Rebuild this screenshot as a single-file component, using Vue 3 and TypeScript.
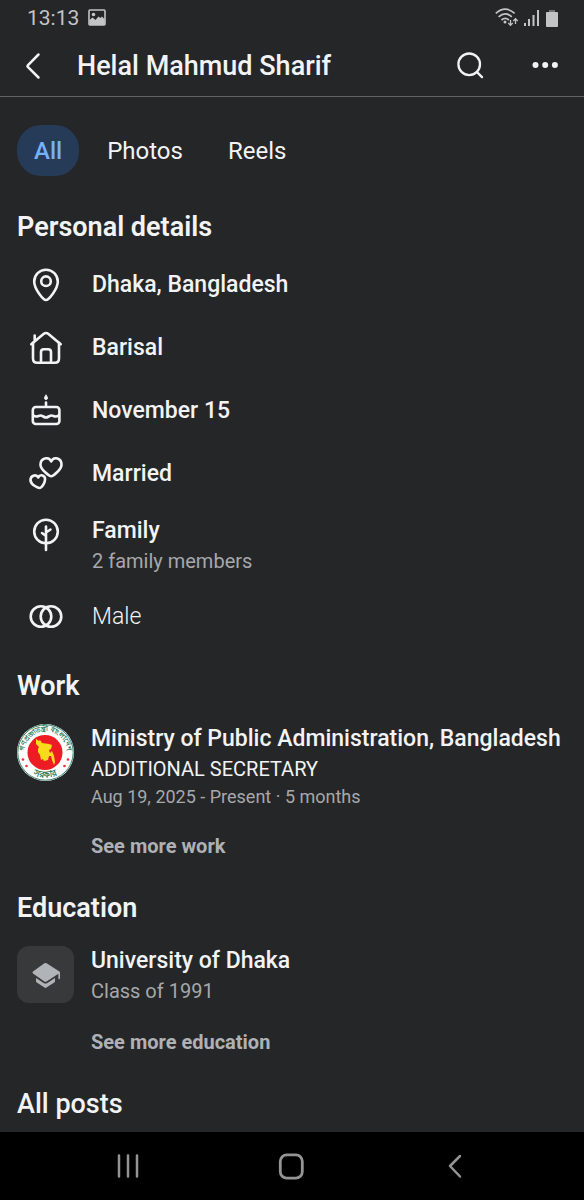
<script setup lang="ts">
import { ref } from 'vue'

type IconName = 'pin' | 'home' | 'cake' | 'hearts' | 'tree' | 'rings'

interface Detail {
  icon: IconName
  text: string
  note?: string
  light?: boolean
}

const tabs: string[] = ['All', 'Photos', 'Reels']
const activeTab = ref<string>('All')

const details: Detail[] = [
  { icon: 'pin', text: 'Dhaka, Bangladesh' },
  { icon: 'home', text: 'Barisal' },
  { icon: 'cake', text: 'November 15' },
  { icon: 'hearts', text: 'Married' },
  { icon: 'tree', text: 'Family', note: '2 family members' },
  { icon: 'rings', text: 'Male', light: true },
]
</script>

<template>
  <div class="screen">
    <div class="status">
      <span class="clock">13:13</span>
      <svg class="picture" width="18" height="18" viewBox="0 0 18 18" aria-hidden="true">
        <rect x="1" y="1" width="16" height="15" rx="1" fill="none" stroke="currentColor" stroke-width="1.6" />
        <circle cx="5.5" cy="5.5" r="1.8" fill="currentColor" />
        <path d="M1.500 11 4.500 8.500 7.500 11l3-3.500 2 1.500 1.500-1.500 2.800 3V16H1.500z" fill="currentColor" />
      </svg>
      <svg class="signals" width="64" height="20" viewBox="0 0 64 20" aria-hidden="true">
        <g fill="none" stroke="currentColor" stroke-width="1.7">
          <path d="M.8 5.400Q10.200-3 19.600 5.400" />
          <path d="M3.600 8.800q6.600-6 13.200 0" />
          <path d="M6.500 12q3.700-3.400 7.400 0" />
        </g>
        <circle cx="10" cy="14" r="1.500" fill="currentColor" />
        <path d="M15.500 12v5m-2.200-2 2.200 2.400 2.200-2.400M20.500 16v-5m-2.200 2 2.200-2.400 2.200 2.400" fill="none" stroke="currentColor" stroke-width="1.300" />
        <g fill="currentColor">
          <rect x="29" y="15" width="2" height="3" />
          <rect x="33" y="11" width="2" height="7" />
          <rect x="37.500" y="7" width="2" height="11" />
          <rect x="42" y="2" width="2" height="16" />
          <rect x="51" y="4" width="12" height="15" rx="1" />
          <rect x="54" y="2" width="6" height="2" opacity=".5" />
        </g>
      </svg>
    </div>

    <header class="bar">
      <button class="icon-button back" type="button" aria-label="Back">
        <svg width="34" height="34" viewBox="0 0 34 34" fill="none" stroke="currentColor" stroke-width="2.500" stroke-linecap="round" stroke-linejoin="round">
          <path d="M23.500 5.500 12.800 16.300Q12 17.100 12.800 17.900L23.500 28.500" />
        </svg>
      </button>
      <h1>Helal Mahmud Sharif</h1>
      <button class="icon-button" type="button" aria-label="Search">
        <svg width="34" height="34" viewBox="0 0 34 34" fill="none" stroke="currentColor" stroke-width="2.300" stroke-linecap="round">
          <circle cx="15.200" cy="15.300" r="10.800" />
          <path d="m23 23.100 5 5" />
        </svg>
      </button>
      <button class="icon-button more" type="button" aria-label="More options">
        <svg width="34" height="34" viewBox="0 0 34 34" fill="currentColor">
          <circle cx="7.500" cy="16" r="3" />
          <circle cx="17.200" cy="16" r="3" />
          <circle cx="26.900" cy="16" r="3" />
        </svg>
      </button>
    </header>

    <main>
      <nav class="tabs" aria-label="Profile sections">
        <button
          v-for="tab in tabs"
          :key="tab"
          type="button"
          :class="{ active: tab === activeTab }"
          @click="activeTab = tab"
        >{{ tab }}</button>
      </nav>

      <section class="personal">
        <h2>Personal details</h2>
        <ul>
          <li v-for="item in details" :key="item.text" :class="{ light: item.light, tall: item.note }">
            <svg class="glyph" width="34" height="34" viewBox="0 0 34 34" fill="none" stroke="currentColor" stroke-width="2.600" stroke-linecap="round" stroke-linejoin="round" aria-hidden="true">
              <template v-if="item.icon === 'pin'">
                <path d="M17 32C14.500 32 5.200 21.200 5.200 13.500a11.800 11.800 0 0 1 23.600 0C28.800 21.200 19.500 32 17 32z" />
                <circle cx="17" cy="13.200" r="4.800" />
              </template>
              <template v-else-if="item.icon === 'home'">
                <path d="M2.300 13.200 14.500 3q2.500-2 5 0L31.700 13.200" />
                <path d="M4 11.800V27.500q0 4.200 4.200 4.200H25.800q4.200 0 4.200-4.200V11.800M5.700 9V4.500" />
                <path d="M12 31.500V21q0-2.800 2.800-2.800h4.400Q22 18.200 22 21v10.500" />
              </template>
              <template v-else-if="item.icon === 'cake'">
                <rect x="3.800" y="13" width="26.600" height="17" rx="3" />
                <path d="M17 12V8.500M4.500 21.500c3 2.500 5 0 7 0s3.500 2 5.500 2 3.500-2 5.500-2 4 2.500 7 0" />
                <path d="M17 1.200c1 1.200 1.500 2 1.500 2.800a1.500 1.500 0 0 1-3 0c0-.8.500-1.600 1.500-2.800z" fill="currentColor" stroke-width="1" />
              </template>
              <template v-else-if="item.icon === 'hearts'">
                <path d="M22.200 19.300C20.500 19.300 11.500 12.500 11.500 7.700C11.500 .8 19.500-.8 22.200 4.500C25-.8 32.500 .8 32.500 7.700C32.500 12.500 24 19.300 22.200 19.300z" />
                <path d="M11 31C9.500 31.200 2 28 1.500 23.500C1.200 18.600 7 16.600 9.300 20.500C11 16.800 16.500 18 16 22.800C15.700 26.800 12.500 30.800 11 31z" />
              </template>
              <template v-else-if="item.icon === 'tree'">
                <circle cx="17" cy="13.500" r="11.800" />
                <path d="M17 32V8.500M17 18l-4-3M17 14.500l4.500-3" />
              </template>
              <template v-else>
                <circle cx="12" cy="16.500" r="10.300" />
                <circle cx="22" cy="16.500" r="10.300" />
              </template>
            </svg>
            <div>
              <p class="title">{{ item.text }}</p>
              <p v-if="item.note" class="note">{{ item.note }}</p>
            </div>
          </li>
        </ul>
      </section>

      <section class="group">
        <h2>Work</h2>
        <div class="entry">
          <svg class="thumb" width="57" height="57" viewBox="0 0 57 57" role="img" aria-label="Government seal">
            <circle cx="28.500" cy="28.500" r="28.500" fill="#fff" />
            <circle cx="28.500" cy="28.500" r="27.700" fill="none" stroke="#39866b" stroke-width="1" />
            <circle cx="28" cy="28.500" r="17.500" fill="#ed1c24" />
            <path fill="#f8dc1c" d="m19 15 3 2 1-1 2 3 7 1 3 1-1 4-2 1 1 3 2-2 2 5 1 6-1 3-2-5-1-4-2 0-1 4-4 1-1-2-2 1-1-5-2-3 0-3 1-2-3-3z" />
            <path id="seal-top" d="M8.200 36A21.500 21.500 0 1 1 48.800 36" fill="none" />
            <path id="seal-bottom" d="M11 46.500A25 25 0 0 0 46 46.500" fill="none" />
            <g class="seal-text" text-anchor="middle">
              <text><textPath href="#seal-top" startOffset="50%">গণপ্রজাতন্ত্রী বাংলাদেশ</textPath></text>
              <text class="large"><textPath href="#seal-bottom" startOffset="50%">সরকার</textPath></text>
            </g>
            <g fill="#ed3036">
              <circle cx="6" cy="35.500" r="1.300" />
              <circle cx="9.500" cy="42" r="1.300" />
              <circle cx="51" cy="35.500" r="1.300" />
              <circle cx="47.500" cy="42" r="1.300" />
            </g>
          </svg>
          <div>
            <p class="title">Ministry of Public Administration, Bangladesh</p>
            <p class="role">ADDITIONAL SECRETARY</p>
            <p class="date">Aug 19, 2025 - Present · 5 months</p>
            <a class="see-more" href="#work">See more work</a>
          </div>
        </div>
      </section>

      <section class="group">
        <h2>Education</h2>
        <div class="entry">
          <div class="thumb cap">
            <svg width="30" height="28" viewBox="0 0 30 28" fill="currentColor" aria-hidden="true">
              <path d="M13.400 2.300q1.100-.6 2.200 0L28.400 10.500q.6.500.6 1.200v5.500q0 1-.8 1t-.8-1v-4.400l-11.800 7.600q-1.100.6-2.200 0L2 12.500q-1.200-1 0-2z" />
              <path d="M5 17v3q0 1 .8 1.600l7.700 5q1 .6 2 0l7.700-5q.8-.6.800-1.600v-3l-8 5.200q-1.500.8-3 0z" />
            </svg>
          </div>
          <div>
            <p class="title">University of Dhaka</p>
            <p class="note">Class of 1991</p>
            <a class="see-more" href="#education">See more education</a>
          </div>
        </div>
      </section>

      <section class="group">
        <h2 class="posts">All posts</h2>
      </section>
    </main>

    <footer class="system">
      <button type="button" aria-label="Recent apps">
        <svg width="30" height="30" viewBox="0 0 30 30" fill="none" stroke="currentColor" stroke-width="2.500" stroke-linecap="round">
          <path d="M6 4.500v21M15 4.500v21M24 4.500v21" />
        </svg>
      </button>
      <button type="button" aria-label="Home">
        <svg width="30" height="30" viewBox="0 0 30 30" fill="none" stroke="currentColor" stroke-width="2.800">
          <rect x="3.300" y="3.800" width="22" height="23.400" rx="6.500" />
        </svg>
      </button>
      <button type="button" aria-label="Back">
        <svg width="30" height="30" viewBox="0 0 30 30" fill="none" stroke="currentColor" stroke-width="2.500" stroke-linecap="round" stroke-linejoin="round">
          <path d="M19 5 9 15l10 10.500" />
        </svg>
      </button>
    </footer>
  </div>
</template>

<style>
body {
  margin: 0;
  background: #252628;
}
</style>

<style scoped>
.screen {
  min-height: 100vh;
  display: flex;
  flex-direction: column;
  background: #252628;
  color: #f2f3f5;
  font-family: Roboto, "Noto Sans", sans-serif;
}
h1, h2, p, ul {
  margin: 0;
  padding: 0;
}
ul {
  list-style: none;
}
button {
  border: 0;
  padding: 0;
  background: none;
  color: inherit;
  font-family: inherit;
}
svg {
  display: block;
  flex: none;
}
.status {
  display: flex;
  align-items: center;
  height: 36px;
  padding: 0 25px 0 27px;
  color: #c3c4c6;
}
.clock {
  font-size: 21px;
  line-height: 36px;
}
.picture {
  margin-left: 9px;
}
.signals {
  margin-left: auto;
}
.bar {
  display: flex;
  align-items: center;
  height: 60px;
  padding: 0 22px 0 15px;
  border-bottom: 1px solid #626365;
}
.bar h1 {
  flex: 1;
  margin-left: 28px;
  font-size: 27px;
  line-height: 32px;
  font-weight: 500;
}
.more {
  margin-left: 40px;
}
main {
  flex: 1;
  padding: 28px 17px 11px;
}
.tabs {
  display: flex;
  gap: 11px;
}
.tabs button {
  height: 51px;
  padding: 0 17px;
  border-radius: 24px;
  font-size: 24px;
}
.tabs .active {
  background: #263b57;
  color: #75b0f8;
  font-weight: 500;
}
h2 {
  font-size: 27px;
  line-height: 32px;
  font-weight: 600;
}
.posts {
  font-weight: 500;
}
.personal {
  margin-top: 35px;
}
.personal ul {
  margin-top: 10px;
}
li {
  display: flex;
  align-items: center;
  min-height: 63px;
}
.tall {
  align-items: flex-start;
  box-sizing: border-box;
  min-height: 80px;
  padding-top: 11px;
}
.glyph {
  margin: 0 29px 0 12px;
}
.tall .glyph {
  margin-top: 2px;
}
.title {
  font-size: 23px;
  line-height: 30px;
  font-weight: 500;
}
.light .title {
  font-weight: 300;
}
.note {
  font-size: 20px;
  line-height: 30px;
  color: #a6a8ab;
}
.role {
  font-size: 20px;
  line-height: 30px;
}
.date {
  font-size: 18px;
  line-height: 26px;
  color: #a6a8ab;
}
.group {
  margin-top: 30px;
}
.personal + .group {
  margin-top: 22px;
}
.entry {
  display: flex;
  align-items: flex-start;
  gap: 17px;
  margin-top: 22px;
}
.thumb {
  flex: none;
  width: 57px;
  height: 57px;
}
.cap {
  display: flex;
  align-items: center;
  justify-content: center;
  border-radius: 12px;
  background: #38393b;
  color: #b0b3b8;
}
.see-more {
  display: block;
  width: fit-content;
  margin-top: 20px;
  font-size: 20px;
  line-height: 32px;
  font-weight: 700;
  color: #afb1b4;
  text-decoration: none;
}
.seal-text {
  font-size: 7px;
  font-weight: 700;
  fill: #217a58;
}
.seal-text .large {
  font-size: 9px;
}
.system {
  display: flex;
  align-items: center;
  justify-content: center;
  gap: 23%;
  height: 68px;
  background: #000;
  color: #949494;
}
</style>
